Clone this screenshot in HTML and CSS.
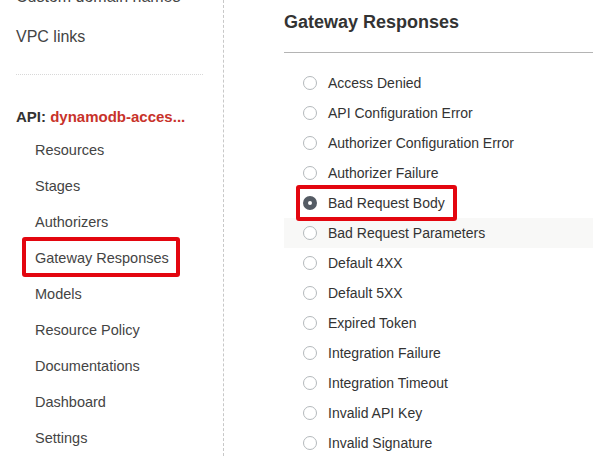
FILE: index.html
```html
<!DOCTYPE html>
<html>
<head>
<meta charset="utf-8">
<link rel="stylesheet" href="styles.css">
</head>
<body>
<div class="page">
  <aside class="sidebar">
    <ul class="top-links">
      <li>Custom domain names</li>
      <li>VPC links</li>
    </ul>
    <div class="sep"></div>
    <div class="api-title">API: <span class="api-name">dynamodb-acces...</span></div>
    <ul class="api-links">
      <li>Resources</li>
      <li>Stages</li>
      <li>Authorizers</li>
      <li class="marked"><span>Gateway Responses</span><i class="annot annot-nav"></i></li>
      <li>Models</li>
      <li>Resource Policy</li>
      <li>Documentations</li>
      <li>Dashboard</li>
      <li>Settings</li>
    </ul>
  </aside>
  <main class="main">
    <h1 class="title">Gateway Responses</h1>
    <hr class="rule">
    <ul class="responses">
      <li class="row"><span class="radio"></span>Access Denied</li>
      <li class="row"><span class="radio"></span>API Configuration Error</li>
      <li class="row"><span class="radio"></span>Authorizer Configuration Error</li>
      <li class="row"><span class="radio"></span>Authorizer Failure</li>
      <li class="row marked"><span class="radio checked"></span>Bad Request Body<i class="annot annot-row"></i></li>
      <li class="row hover"><span class="radio"></span>Bad Request Parameters</li>
      <li class="row"><span class="radio"></span>Default 4XX</li>
      <li class="row"><span class="radio"></span>Default 5XX</li>
      <li class="row"><span class="radio"></span>Expired Token</li>
      <li class="row"><span class="radio"></span>Integration Failure</li>
      <li class="row"><span class="radio"></span>Integration Timeout</li>
      <li class="row"><span class="radio"></span>Invalid API Key</li>
      <li class="row"><span class="radio"></span>Invalid Signature</li>
    </ul>
  </main>
</div>
</body>
</html>
```
FILE: styles.css
```css
html, body {
  margin: 0;
  padding: 0;
  background: #fff;
  overflow: hidden;
}
body {
  font-family: "Liberation Sans", Arial, sans-serif;
  color: #444;
}
ul {
  list-style: none;
  margin: 0;
  padding: 0;
}
.page {
  display: flex;
  height: 456px;
}
.sidebar {
  width: 223px;
  flex: none;
  border-right: 1px dashed #c8c8c8;
  box-sizing: content-box;
}
.top-links {
  margin-top: -23px;
  padding-left: 16px;
}
.top-links li {
  font-size: 16px;
  line-height: 40px;
  color: #444;
}
.sep {
  margin: 17px 20px 0 16px;
  border-top: 1px dotted #d8d8d8;
}
.api-title {
  margin-top: 32px;
  padding-left: 16px;
  font-size: 15px;
  font-weight: bold;
  line-height: 20px;
  color: #333;
}
.api-name {
  color: #c8322a;
}
.api-links {
  margin-top: 5px;
}
.api-links li {
  font-size: 14.5px;
  line-height: 36px;
  padding-left: 35px;
  color: #444;
}
.marked {
  position: relative;
}
.annot {
  position: absolute;
  border: 4px solid #e3060f;
  border-radius: 3px;
  box-sizing: border-box;
  pointer-events: none;
}
.annot-nav {
  left: 22px;
  top: -3px;
  width: 158px;
  height: 40px;
}
.main {
  flex: 1;
  padding-left: 60px;
  padding-top: 10px;
  min-width: 0;
}
.title {
  margin: 0;
  font-size: 18px;
  font-weight: bold;
  line-height: 24px;
  color: #333;
}
.rule {
  margin: 18px 0 0 0;
  border: 0;
  border-top: 1px solid #b4b4b4;
  height: 0;
}
.responses {
  margin-top: 15px;
}
.row {
  display: flex;
  align-items: center;
  height: 30px;
  padding-left: 19px;
  font-size: 14px;
  color: #333;
}
.row.hover {
  background: #f8f8f7;
}
.radio {
  width: 14px;
  height: 14px;
  box-sizing: border-box;
  border: 1px solid #b4b9bc;
  border-radius: 50%;
  background: #fff;
  margin-right: 11px;
  flex: none;
}
.radio.checked {
  border: 5px solid #545b64;
}
.annot-row {
  left: 12px;
  top: -3px;
  width: 161px;
  height: 36px;
}
```
